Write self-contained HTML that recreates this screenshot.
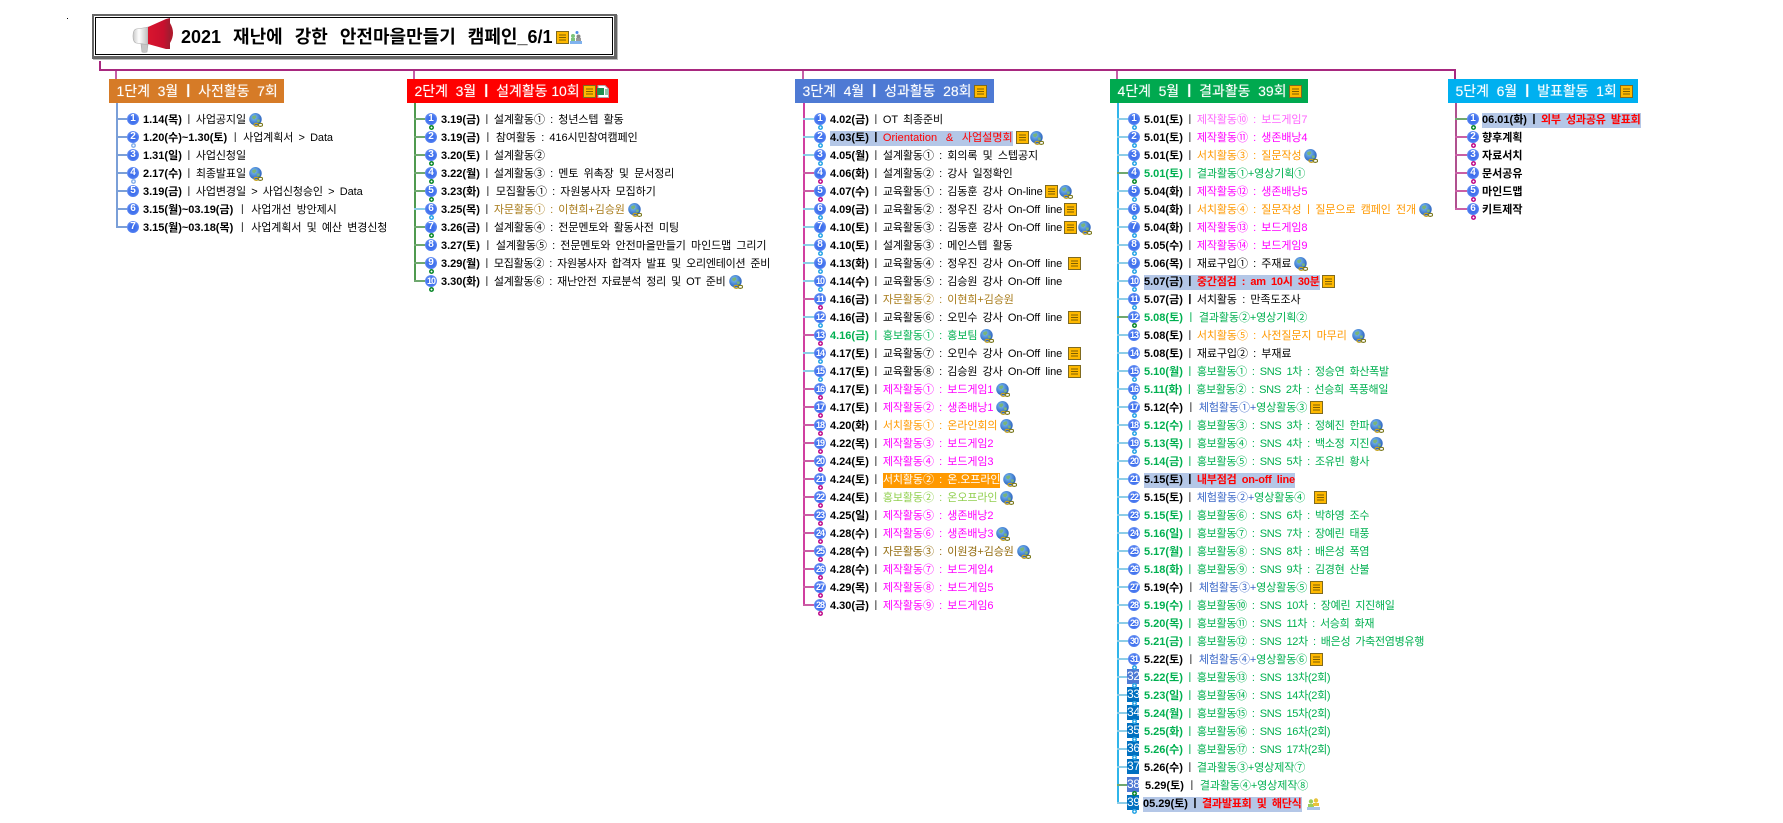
<!DOCTYPE html>
<html lang="ko"><head><meta charset="utf-8"><title>2021 재난에 강한 안전마을만들기 캠페인</title>
<style>
html,body{margin:0;padding:0;background:#fff;width:1783px;height:823px;overflow:hidden}
body{position:relative;font-family:"Liberation Sans","Noto Sans CJK KR",sans-serif;font-size:11px;color:#000}
.a{position:absolute}
.root{left:92px;top:14px;width:520px;height:40px;border:2px solid #666;box-shadow:inset 0 0 0 1px #fff,inset 0 0 0 2px #000,1px 1px 0 #bbb;border-right-width:3px;border-bottom-width:3px}
.rt{left:181px;top:24px;font-size:18px;font-weight:bold;line-height:26px;white-space:pre;word-spacing:1px}
.h{top:79px;height:24px;line-height:24px;color:#fff;font-size:14px;white-space:pre;padding-left:7.500px;box-sizing:border-box;letter-spacing:-.05px;text-shadow:0 0 1px rgba(255,255,255,.45)}
.h svg{vertical-align:-2px;margin-left:3px}
.h i{width:20px;font-size:14px;color:#fff;font-weight:bold}
.c{position:absolute;top:110px}
.t{position:absolute;left:0;top:-7px;width:2px}
.r{position:relative;height:18px;width:400px;white-space:pre;word-spacing:2.300px;line-height:18px}
.r>u{position:absolute;left:0;top:8px;width:11px;height:2px;background:#8ccde8}
.r>s{position:absolute;left:11px;top:3px;width:12px;height:12px;border-radius:50%;background:radial-gradient(circle at 50% 55%,#2f62ea 0,#4d7cf0 55%,#9db8f8 100%);color:#fff;font:bold 10px/12px "Liberation Sans",sans-serif;text-align:center;text-decoration:none;letter-spacing:0;word-spacing:0}
.r>s.d{font-size:9px;letter-spacing:-1px}
.r>s.q{left:10px;top:1px;width:12px;height:15px;border-radius:0;background:#0070c0;font:12px/15px "Liberation Sans",sans-serif;letter-spacing:-.3px}
.r>s.q2{background:#4e7ad4}
.r>em{position:absolute;left:15px;top:15px;width:5px;height:5px;border-radius:50%;box-shadow:inset 0 0 0 1.500px var(--k);background:linear-gradient(#fff,#fff) center/3px 1px no-repeat,linear-gradient(#fff,#fff) center/1px 3px no-repeat,var(--k);z-index:2}
.r>div{position:absolute;left:27px;top:1px;letter-spacing:-.1px}
.r>div.G{letter-spacing:-.3px}
.r>div.K{letter-spacing:-.1px}
.r>div.T{letter-spacing:-.25px}
.r>div b{letter-spacing:0}
.r>div b.R{letter-spacing:-.2px}
.b{--k:#2ea7e6}.m{--k:#c0128c}.n{--k:#0f8a2e}
.r.m>u{background:#c95fa5}.r.n>u{background:#6fa86f}
b{font-weight:bold}
i{display:inline-block;width:14px;text-align:center;font-style:normal;font-size:11px;word-spacing:0;letter-spacing:0;color:#222}
i.w{width:16px}
i.x{width:18px}
.hl{background:#b4c7e7;display:inline-block;line-height:15px}
.M{color:#ff00ff}.L{color:#ff66ff}.O{color:#ff9900}.B{color:#a87b1a}.D{color:#946c10}.G{color:#00b050}.LG{color:#92d050}.U{color:#3b68c8}.R{color:#ff0000}
.G i{color:#00b050}.O i{color:#ff9900}
.oh{background:#ff9900;color:#fff;display:inline-block;line-height:15px}
svg.i{width:14px;height:14px;vertical-align:-4px;margin-left:3px}
svg.t2{width:13px;height:13px;vertical-align:-3px;margin-left:2px}
.gp{margin-left:5px}
</style></head><body>
<svg width="0" height="0" style="position:absolute"><defs>
<radialGradient id="gg" cx=".4" cy=".35" r=".7"><stop offset="0" stop-color="#7cc0f6"/><stop offset="1" stop-color="#2459b8"/></radialGradient>
<symbol id="gl" viewBox="0 0 13 13"><circle cx="6" cy="5.800" r="5.800" fill="url(#gg)"/><path d="M3 3l3-1 1 2-2 2-2-1zM7 6l3 0 0 2-2 1z" fill="#79b47a"/><ellipse cx="6.800" cy="11" rx="2.200" ry="1.400" fill="none" stroke="#c9a41c" stroke-width="1.100"/><ellipse cx="10.500" cy="11" rx="2.200" ry="1.400" fill="none" stroke="#7a781c" stroke-width="1.100"/></symbol>
<symbol id="nt" viewBox="0 0 13 13"><rect x=".5" y=".5" width="12" height="12" fill="#ffb900" stroke="#7f6a20"/><path d="M3 4h7M3 6.500h7M3 9h7" stroke="#7f6000" stroke-width="1"/></symbol>
</defs></svg>

<div class="a" style="left:67px;top:18px;width:1px;height:1px;background:#000"></div>

<svg class="a" style="left:0;top:0" width="1783" height="110">
<path d="M100 61V70H1455V79" fill="none" stroke="#a8287f" stroke-width="2"/>
<path d="M116 71V79M414 71V79M803 71V79M1117 71V79" stroke="#c65fa8" stroke-width="2"/>
</svg>

<div class="a root"></div>
<svg class="a" style="left:128px;top:14px" width="50" height="42" viewBox="0 0 50 42">
<defs><linearGradient id="rd" x1="0" y1="0" x2="1" y2="0"><stop offset="0" stop-color="#d9152e"/><stop offset=".7" stop-color="#c8102e"/><stop offset="1" stop-color="#a01c30"/></linearGradient>
<linearGradient id="gy" x1="0" y1="0" x2="1" y2="0"><stop offset="0" stop-color="#c9c9c9"/><stop offset=".4" stop-color="#fff"/><stop offset="1" stop-color="#bdbdbd"/></linearGradient></defs>
<path d="M13 30h7l-1 8q-3 1-5 0z" fill="#c6c6c6" stroke="#aaa" stroke-width=".6"/>
<path d="M8 15q-3 1-3 7t3 7q9 1 12 2V13q-4 1-12 2z" fill="url(#gy)" stroke="#aaa" stroke-width=".6"/>
<path d="M20 13L38 5l4-1V35H38L20 30z" fill="url(#rd)"/>
<path d="M42 9q3 5 3 10t-3 10z" fill="#b0182c"/>
</svg>
<div class="a rt">2021  재난에  강한  안전마을만들기  캠페인_6/1</div>
<svg class="a" style="left:556px;top:31px" width="13" height="13"><use href="#nt"/></svg>
<svg class="a" style="left:570px;top:31px" width="12" height="13" viewBox="0 0 12 13"><circle cx="3" cy="5" r="2" fill="#7cc47c"/><rect x="1" y="7" width="4" height="3" fill="#7cc47c"/><circle cx="7" cy="1.500" r="1.500" fill="#4d8be8"/><circle cx="8.500" cy="5.500" r="2" fill="#888"/><rect x="6" y="7" width="5" height="3" fill="#999"/><rect x="0" y="10" width="12" height="3" fill="#7fb2ee"/></svg>

<div class="a h" style="left:109px;width:175px;background:#d67b27">1단계  3월<i>ㅣ</i>사전활동  7회</div>
<div class="a h" style="left:407px;width:211px;background:#ff0000">2단계  3월<i>ㅣ</i>설계활동 10회<svg width="13" height="13"><use href="#nt"/></svg><svg width="12" height="13" viewBox="0 0 12 13" style="margin-left:1px"><path d="M1 .5h7l3.500 3.500V12.500H1z" fill="#fff" stroke="#aaa"/><rect x="0" y="3" width="7" height="7" fill="#1e8e4e"/><path d="M8 5h3M8 7h3M8 9h3" stroke="#1e8e4e"/></svg></div>
<div class="a h" style="left:795px;width:199px;background:#4e7ad4">3단계  4월<i>ㅣ</i>성과활동  28회<svg width="13" height="13"><use href="#nt"/></svg></div>
<div class="a h" style="left:1110px;width:198px;background:#00a94f">4단계  5월<i>ㅣ</i>결과활동  39회<svg width="13" height="13"><use href="#nt"/></svg></div>
<div class="a h" style="left:1448px;width:190px;background:#00b0f0">5단계  6월<i>ㅣ</i>발표활동  1회<svg width="13" height="13"><use href="#nt"/></svg></div>

<!-- column 1 -->
<div class="c" style="left:116px">
<div class="t" style="height:125px;background:#7a9fd8"></div>
<div class="r"><u style="background:#7a9fd8"></u><s>1</s><div><b>1.14(목)</b><i>ㅣ</i>사업공지일<svg class="i"><use href="#gl"/></svg></div></div>
<div class="r b"><u style="background:#7a9fd8"></u><s>2</s><em style="--k:#8cb4ec"></em><div><b>1.20(수)~1.30(토)</b><i class="w">ㅣ</i>사업계획서 > Data</div></div>
<div class="r"><u style="background:#7a9fd8"></u><s>3</s><div><b>1.31(일)</b><i>ㅣ</i>사업신청일</div></div>
<div class="r b"><u style="background:#7a9fd8"></u><s>4</s><em style="--k:#8cb4ec"></em><div><b>2.17(수)</b><i>ㅣ</i>최종발표일<svg class="i"><use href="#gl"/></svg></div></div>
<div class="r"><u style="background:#7a9fd8"></u><s>5</s><div><b>3.19(금)</b><i>ㅣ</i>사업변경일 > 사업신청승인 > Data</div></div>
<div class="r"><u style="background:#7a9fd8"></u><s>6</s><div><b>3.15(월)~03.19(금)</b><i class="x">ㅣ</i>사업개선 방안제시</div></div>
<div class="r"><u style="background:#7a9fd8"></u><s>7</s><div><b>3.15(월)~03.18(목)</b><i class="x">ㅣ</i>사업계획서 및 예산 변경신청</div></div>
</div>

<!-- column 2 -->
<div class="c" style="left:414px">
<div class="t" style="height:179px;background:#4f9a4f"></div>
<div class="r n"><u></u><s>1</s><em></em><div><b>3.19(금)</b><i>ㅣ</i>설계활동① : 청년스텝 활동</div></div>
<div class="r n"><u></u><s>2</s><div><b>3.19(금)</b><i class="w">ㅣ</i>참여활동 : 416시민참여캠페인</div></div>
<div class="r n"><u></u><s>3</s><em></em><div><b>3.20(토)</b><i>ㅣ</i>설계활동②</div></div>
<div class="r n"><u></u><s>4</s><em></em><div><b>3.22(월)</b><i>ㅣ</i>설계활동③ : 멘토 위촉장 및 문서정리</div></div>
<div class="r n"><u></u><s>5</s><em></em><div><b>3.23(화)</b><i class="w">ㅣ</i>모집활동① : 자원봉사자 모집하기</div></div>
<div class="r b"><u></u><s>6</s><em></em><div><b>3.25(목)</b><i>ㅣ</i><span class="B">자문활동① : 이현희+김승원</span><svg class="i"><use href="#gl"/></svg></div></div>
<div class="r n"><u></u><s>7</s><em></em><div><b>3.26(금)</b><i>ㅣ</i>설계활동④ : 전문멘토와 활동사전 미팅</div></div>
<div class="r n"><u></u><s>8</s><div><b>3.27(토)</b><i class="w">ㅣ</i>설계활동⑤ : 전문멘토와 안전마을만들기 마인드맵 그리기</div></div>
<div class="r n"><u></u><s>9</s><em></em><div class="T"><b>3.29(월)</b><i>ㅣ</i>모집활동② : 자원봉사자 합격자 발표 및 오리엔테이션 준비</div></div>
<div class="r n"><u></u><s class="d">10</s><em></em><div class="T"><b>3.30(화)</b><i>ㅣ</i>설계활동⑥ : 재난안전 자료분석 정리 및 OT 준비<svg class="i"><use href="#gl"/></svg></div></div>
</div>

<!-- column 3 -->
<div class="c" style="left:803px">
<div class="t" style="height:503px;background:#d03fa0"></div>
<div class="r b"><u></u><s>1</s><em></em><div><b>4.02(금)</b><i>ㅣ</i>OT 최종준비</div></div>
<div class="r b"><u></u><s>2</s><em></em><div><span class="hl"><b>4.03(토)</b><i style="font-weight:bold;color:#000">ㅣ</i><span class="R" style="word-spacing:5.500px;letter-spacing:.05px">Orientation &amp; 사업설명회</span></span><svg class="t2" style="margin-left:3px"><use href="#nt"/></svg><svg class="i" style="margin-left:1px"><use href="#gl"/></svg></div></div>
<div class="r b"><u></u><s>3</s><em></em><div><b>4.05(월)</b><i>ㅣ</i>설계활동① : 회의록 및 스텝공지</div></div>
<div class="r m"><u></u><s>4</s><em></em><div><b>4.06(화)</b><i>ㅣ</i>설계활동② : 강사 일정확인</div></div>
<div class="r m"><u></u><s>5</s><em></em><div><b>4.07(수)</b><i>ㅣ</i>교육활동① : 김동훈 강사 On-line<svg class="t2"><use href="#nt"/></svg><svg class="i" style="margin-left:1px"><use href="#gl"/></svg></div></div>
<div class="r b"><u></u><s>6</s><em></em><div><b>4.09(금)</b><i>ㅣ</i>교육활동② : 정우진 강사 On-Off line<svg class="t2"><use href="#nt"/></svg></div></div>
<div class="r b"><u></u><s>7</s><em></em><div><b>4.10(토)</b><i>ㅣ</i>교육활동③ : 김동훈 강사 On-Off line<svg class="t2"><use href="#nt"/></svg><svg class="i" style="margin-left:1px"><use href="#gl"/></svg></div></div>
<div class="r b"><u></u><s>8</s><em></em><div><b>4.10(토)</b><i>ㅣ</i>설계활동③ : 메인스텝 활동</div></div>
<div class="r b"><u></u><s>9</s><em></em><div><b>4.13(화)</b><i>ㅣ</i>교육활동④ : 정우진 강사 On-Off line <svg class="t2" style="margin-left:1px"><use href="#nt"/></svg></div></div>
<div class="r b"><u></u><s class="d">10</s><em></em><div><b>4.14(수)</b><i>ㅣ</i>교육활동⑤ : 김승원 강사 On-Off line</div></div>
<div class="r m"><u></u><s class="d">11</s><em></em><div><b>4.16(금)</b><i>ㅣ</i><span class="B">자문활동② : 이현희+김승원</span></div></div>
<div class="r b"><u></u><s class="d">12</s><em></em><div><b>4.16(금)</b><i>ㅣ</i>교육활동⑥ : 오민수 강사 On-Off line <svg class="t2" style="margin-left:1px"><use href="#nt"/></svg></div></div>
<div class="r m"><u></u><s class="d">13</s><em></em><div class="G K"><b>4.16(금)</b><i>ㅣ</i>홍보활동① : 홍보팀<svg class="i"><use href="#gl"/></svg></div></div>
<div class="r b"><u></u><s class="d">14</s><em></em><div><b>4.17(토)</b><i>ㅣ</i>교육활동⑦ : 오민수 강사 On-Off line <svg class="t2" style="margin-left:1px"><use href="#nt"/></svg></div></div>
<div class="r b"><u></u><s class="d">15</s><em></em><div><b>4.17(토)</b><i>ㅣ</i>교육활동⑧ : 김승원 강사 On-Off line <svg class="t2" style="margin-left:1px"><use href="#nt"/></svg></div></div>
<div class="r m"><u></u><s class="d">16</s><em></em><div><b>4.17(토)</b><i>ㅣ</i><span class="M">제작활동① : 보드게임1</span><svg class="i"><use href="#gl"/></svg></div></div>
<div class="r m"><u></u><s class="d">17</s><em></em><div><b>4.17(토)</b><i>ㅣ</i><span class="M">제작활동② : 생존배낭1</span><svg class="i"><use href="#gl"/></svg></div></div>
<div class="r m"><u></u><s class="d">18</s><em></em><div><b>4.20(화)</b><i>ㅣ</i><span class="O">서치활동① : 온라인회의</span><svg class="i"><use href="#gl"/></svg></div></div>
<div class="r m"><u></u><s class="d">19</s><em></em><div><b>4.22(목)</b><i>ㅣ</i><span class="M">제작활동③ : 보드게임2</span></div></div>
<div class="r m"><u></u><s class="d">20</s><em></em><div><b>4.24(토)</b><i>ㅣ</i><span class="M">제작활동④ : 보드게임3</span></div></div>
<div class="r m"><u></u><s class="d">21</s><em></em><div><b>4.24(토)</b><i>ㅣ</i><span class="oh">서치활동② : 온.오프라인</span><svg class="i"><use href="#gl"/></svg></div></div>
<div class="r m"><u></u><s class="d">22</s><em></em><div><b>4.24(토)</b><i>ㅣ</i><span class="LG">홍보활동② : 온오프라인</span><svg class="i"><use href="#gl"/></svg></div></div>
<div class="r m"><u></u><s class="d">23</s><em></em><div><b>4.25(일)</b><i>ㅣ</i><span class="M">제작활동⑤ : 생존배낭2</span></div></div>
<div class="r m"><u></u><s class="d">24</s><em></em><div><b>4.28(수)</b><i>ㅣ</i><span class="M">제작활동⑥ : 생존배낭3</span><svg class="i"><use href="#gl"/></svg></div></div>
<div class="r m"><u></u><s class="d">25</s><em></em><div><b>4.28(수)</b><i>ㅣ</i><span class="D">자문활동③ : 이원경+김승원</span><svg class="i"><use href="#gl"/></svg></div></div>
<div class="r m"><u></u><s class="d">26</s><em></em><div><b>4.28(수)</b><i>ㅣ</i><span class="M">제작활동⑦ : 보드게임4</span></div></div>
<div class="r m"><u></u><s class="d">27</s><em></em><div><b>4.29(목)</b><i>ㅣ</i><span class="M">제작활동⑧ : 보드게임5</span></div></div>
<div class="r m"><u></u><s class="d">28</s><em></em><div><b>4.30(금)</b><i>ㅣ</i><span class="M">제작활동⑨ : 보드게임6</span></div></div>
</div>

<!-- column 4 -->
<div class="c" style="left:1117px">
<div class="t" style="height:701px;background:#2fb5ea"></div>
<div class="r b"><u></u><s>1</s><em></em><div><b>5.01(토)</b><i>ㅣ</i><span class="L">제작활동⑩ : 보드게임7</span></div></div>
<div class="r b"><u></u><s>2</s><em></em><div><b>5.01(토)</b><i>ㅣ</i><span class="M">제작활동⑪ : 생존배낭4</span></div></div>
<div class="r b"><u></u><s>3</s><em></em><div><b>5.01(토)</b><i>ㅣ</i><span class="O">서치활동③ : 질문작성</span><svg class="i"><use href="#gl"/></svg></div></div>
<div class="r n"><u></u><s>4</s><em></em><div class="G K"><b>5.01(토)</b><i>ㅣ</i>결과활동①+영상기획①</div></div>
<div class="r b"><u></u><s>5</s><em></em><div><b>5.04(화)</b><i>ㅣ</i><span class="M">제작활동⑫ : 생존배낭5</span></div></div>
<div class="r b"><u></u><s>6</s><em></em><div><b>5.04(화)</b><i>ㅣ</i><span class="O">서치활동④ : 질문작성<i>ㅣ</i>질문으로 캠페인 전개</span><svg class="i"><use href="#gl"/></svg></div></div>
<div class="r b"><u></u><s>7</s><em></em><div><b>5.04(화)</b><i>ㅣ</i><span class="M">제작활동⑬ : 보드게임8</span></div></div>
<div class="r b"><u></u><s>8</s><em></em><div><b>5.05(수)</b><i>ㅣ</i><span class="M">제작활동⑭ : 보드게임9</span></div></div>
<div class="r b"><u></u><s>9</s><em></em><div><b>5.06(목)</b><i>ㅣ</i>재료구입① : 주재료<svg class="i"><use href="#gl"/></svg></div></div>
<div class="r b"><u></u><s class="d">10</s><em></em><div><span class="hl"><b>5.07(금)</b><i style="font-weight:bold;color:#000">ㅣ</i><b class="R">중간점검 : am 10시 30분</b></span><svg class="t2"><use href="#nt"/></svg></div></div>
<div class="r b"><u></u><s class="d">11</s><em></em><div><b>5.07(금)</b><i style="font-weight:bold;color:#000">ㅣ</i>서치활동 : 만족도조사</div></div>
<div class="r n"><u></u><s class="d">12</s><em></em><div class="G K"><b>5.08(토)</b><i class="w">ㅣ</i>결과활동②+영상기획②</div></div>
<div class="r"><u></u><s class="d">13</s><div><b>5.08(토)</b><i>ㅣ</i><span class="O">서치활동⑤ : 사전질문지 마무리</span><svg class="i" style="margin-left:5px"><use href="#gl"/></svg></div></div>
<div class="r"><u></u><s class="d">14</s><div><b>5.08(토)</b><i>ㅣ</i>재료구입② : 부재료</div></div>
<div class="r b"><u></u><s class="d">15</s><em></em><div class="G"><b>5.10(월)</b><i>ㅣ</i>홍보활동① : SNS 1차 : 정승연 화산폭발</div></div>
<div class="r b"><u></u><s class="d">16</s><em></em><div class="G"><b>5.11(화)</b><i>ㅣ</i>홍보활동② : SNS 2차 : 선승희 폭풍해일</div></div>
<div class="r b"><u></u><s class="d">17</s><em></em><div><b>5.12(수)</b><i class="w">ㅣ</i><span class="U">체험활동①+</span><span class="G">영상활동③</span><svg class="t2" style="margin-left:3px"><use href="#nt"/></svg></div></div>
<div class="r b"><u></u><s class="d">18</s><em></em><div class="G"><b>5.12(수)</b><i>ㅣ</i>홍보활동③ : SNS 3차 : 정혜진 한파<svg class="i" style="margin-left:1px"><use href="#gl"/></svg></div></div>
<div class="r b"><u></u><s class="d">19</s><em></em><div class="G"><b>5.13(목)</b><i>ㅣ</i>홍보활동④ : SNS 4차 : 백소정 지진<svg class="i" style="margin-left:1px"><use href="#gl"/></svg></div></div>
<div class="r"><u></u><s class="d">20</s><div class="G"><b>5.14(금)</b><i>ㅣ</i>홍보활동⑤ : SNS 5차 : 조유빈 황사</div></div>
<div class="r"><u></u><s class="d">21</s><div><span class="hl"><b>5.15(토)</b><i style="font-weight:bold;color:#000">ㅣ</i><b class="R">내부점검 on-off line</b></span></div></div>
<div class="r"><u></u><s class="d">22</s><div><b>5.15(토)</b><i>ㅣ</i><span class="U">체험활동②+</span><span class="G">영상활동④</span><svg class="t2" style="margin-left:9px"><use href="#nt"/></svg></div></div>
<div class="r"><u></u><s class="d">23</s><div class="G"><b>5.15(토)</b><i>ㅣ</i>홍보활동⑥ : SNS 6차 : 박하영 조수</div></div>
<div class="r"><u></u><s class="d">24</s><div class="G"><b>5.16(일)</b><i>ㅣ</i>홍보활동⑦ : SNS 7차 : 장예린 태풍</div></div>
<div class="r"><u></u><s class="d">25</s><div class="G"><b>5.17(월)</b><i>ㅣ</i>홍보활동⑧ : SNS 8차 : 배은성 폭염</div></div>
<div class="r"><u></u><s class="d">26</s><div class="G"><b>5.18(화)</b><i>ㅣ</i>홍보활동⑨ : SNS 9차 : 김경현 산불</div></div>
<div class="r"><u></u><s class="d">27</s><div><b>5.19(수)</b><i class="w">ㅣ</i><span class="U">체험활동③+</span><span class="G">영상활동⑤</span><svg class="t2" style="margin-left:3px"><use href="#nt"/></svg></div></div>
<div class="r"><u></u><s class="d">28</s><div class="G"><b>5.19(수)</b><i>ㅣ</i>홍보활동⑩ : SNS 10차 : 장예린 지진해일</div></div>
<div class="r"><u></u><s class="d">29</s><div class="G"><b>5.20(목)</b><i>ㅣ</i>홍보활동⑪ : SNS 11차 : 서승희 화재</div></div>
<div class="r"><u></u><s class="d">30</s><div class="G"><b>5.21(금)</b><i>ㅣ</i>홍보활동⑫ : SNS 12차 : 배은성 가축전염병유행</div></div>
<div class="r b"><u></u><s class="d">31</s><em></em><div><b>5.22(토)</b><i class="w">ㅣ</i><span class="U">체험활동④+</span><span class="G">영상활동⑥</span><svg class="t2" style="margin-left:3px"><use href="#nt"/></svg></div></div>
<div class="r b"><u></u><s class="q q2">32</s><em></em><div class="G"><b>5.22(토)</b><i>ㅣ</i>홍보활동⑬ : SNS 13차(2회)</div></div>
<div class="r b"><u></u><s class="q">33</s><em></em><div class="G"><b>5.23(일)</b><i>ㅣ</i>홍보활동⑭ : SNS 14차(2회)</div></div>
<div class="r b"><u></u><s class="q">34</s><em></em><div class="G"><b>5.24(월)</b><i>ㅣ</i>홍보활동⑮ : SNS 15차(2회)</div></div>
<div class="r b"><u></u><s class="q">35</s><em></em><div class="G"><b>5.25(화)</b><i>ㅣ</i>홍보활동⑯ : SNS 16차(2회)</div></div>
<div class="r b"><u></u><s class="q">36</s><em></em><div class="G"><b>5.26(수)</b><i>ㅣ</i>홍보활동⑰ : SNS 17차(2회)</div></div>
<div class="r b"><u></u><s class="q">37</s><div><b>5.26(수)</b><i>ㅣ</i><span class="G">결과활동③+영상제작⑦</span></div></div>
<div class="r n"><u></u><s class="q q2">38</s><em></em><div style="left:28px"><b>5.29(토)</b><i class="w">ㅣ</i><span class="G">결과활동④+영상제작⑧</span></div></div>
<div class="r b"><u></u><s class="q">39</s><em></em><div style="left:26px"><span class="hl"><b>05.29(토)</b><i style="font-weight:bold;color:#000">ㅣ</i><b class="R">결과발표회 및 해단식</b></span><svg width="13" height="13" viewBox="0 0 13 13" class="gp" style="vertical-align:-3px"><circle cx="4" cy="4.500" r="2.200" fill="#9bcf5c"/><circle cx="9" cy="3.500" r="2.200" fill="#e8c33c"/><rect x="1" y="7" width="6" height="3" fill="#9bcf5c"/><rect x="6" y="6" width="6" height="3" fill="#e8c33c"/><rect x="0" y="10" width="13" height="3" fill="#a8c4e8"/></svg></div></div>
</div>

<!-- column 5 -->
<div class="c" style="left:1455px">
<div class="t" style="height:107px;background:#b0508f"></div>
<div class="r n"><u style="width:12px"></u><s style="left:12px">1</s><em style="left:16px"></em><div><span class="hl"><b>06.01(화)</b><i style="font-weight:bold;color:#000">ㅣ</i><b class="R">외부 성과공유 발표회</b></span></div></div>
<div class="r m"><u style="width:12px"></u><s style="left:12px">2</s><em style="left:16px"></em><div><b>향후계획</b></div></div>
<div class="r m"><u style="width:12px"></u><s style="left:12px">3</s><em style="left:16px"></em><div><b>자료서치</b></div></div>
<div class="r m"><u style="width:12px"></u><s style="left:12px">4</s><em style="left:16px"></em><div><b>문서공유</b></div></div>
<div class="r m"><u style="width:12px"></u><s style="left:12px">5</s><em style="left:16px"></em><div><b>마인드맵</b></div></div>
<div class="r m"><u style="width:12px"></u><s style="left:12px">6</s><em style="left:16px"></em><div><b>키트제작</b></div></div>
</div>
</body></html>
